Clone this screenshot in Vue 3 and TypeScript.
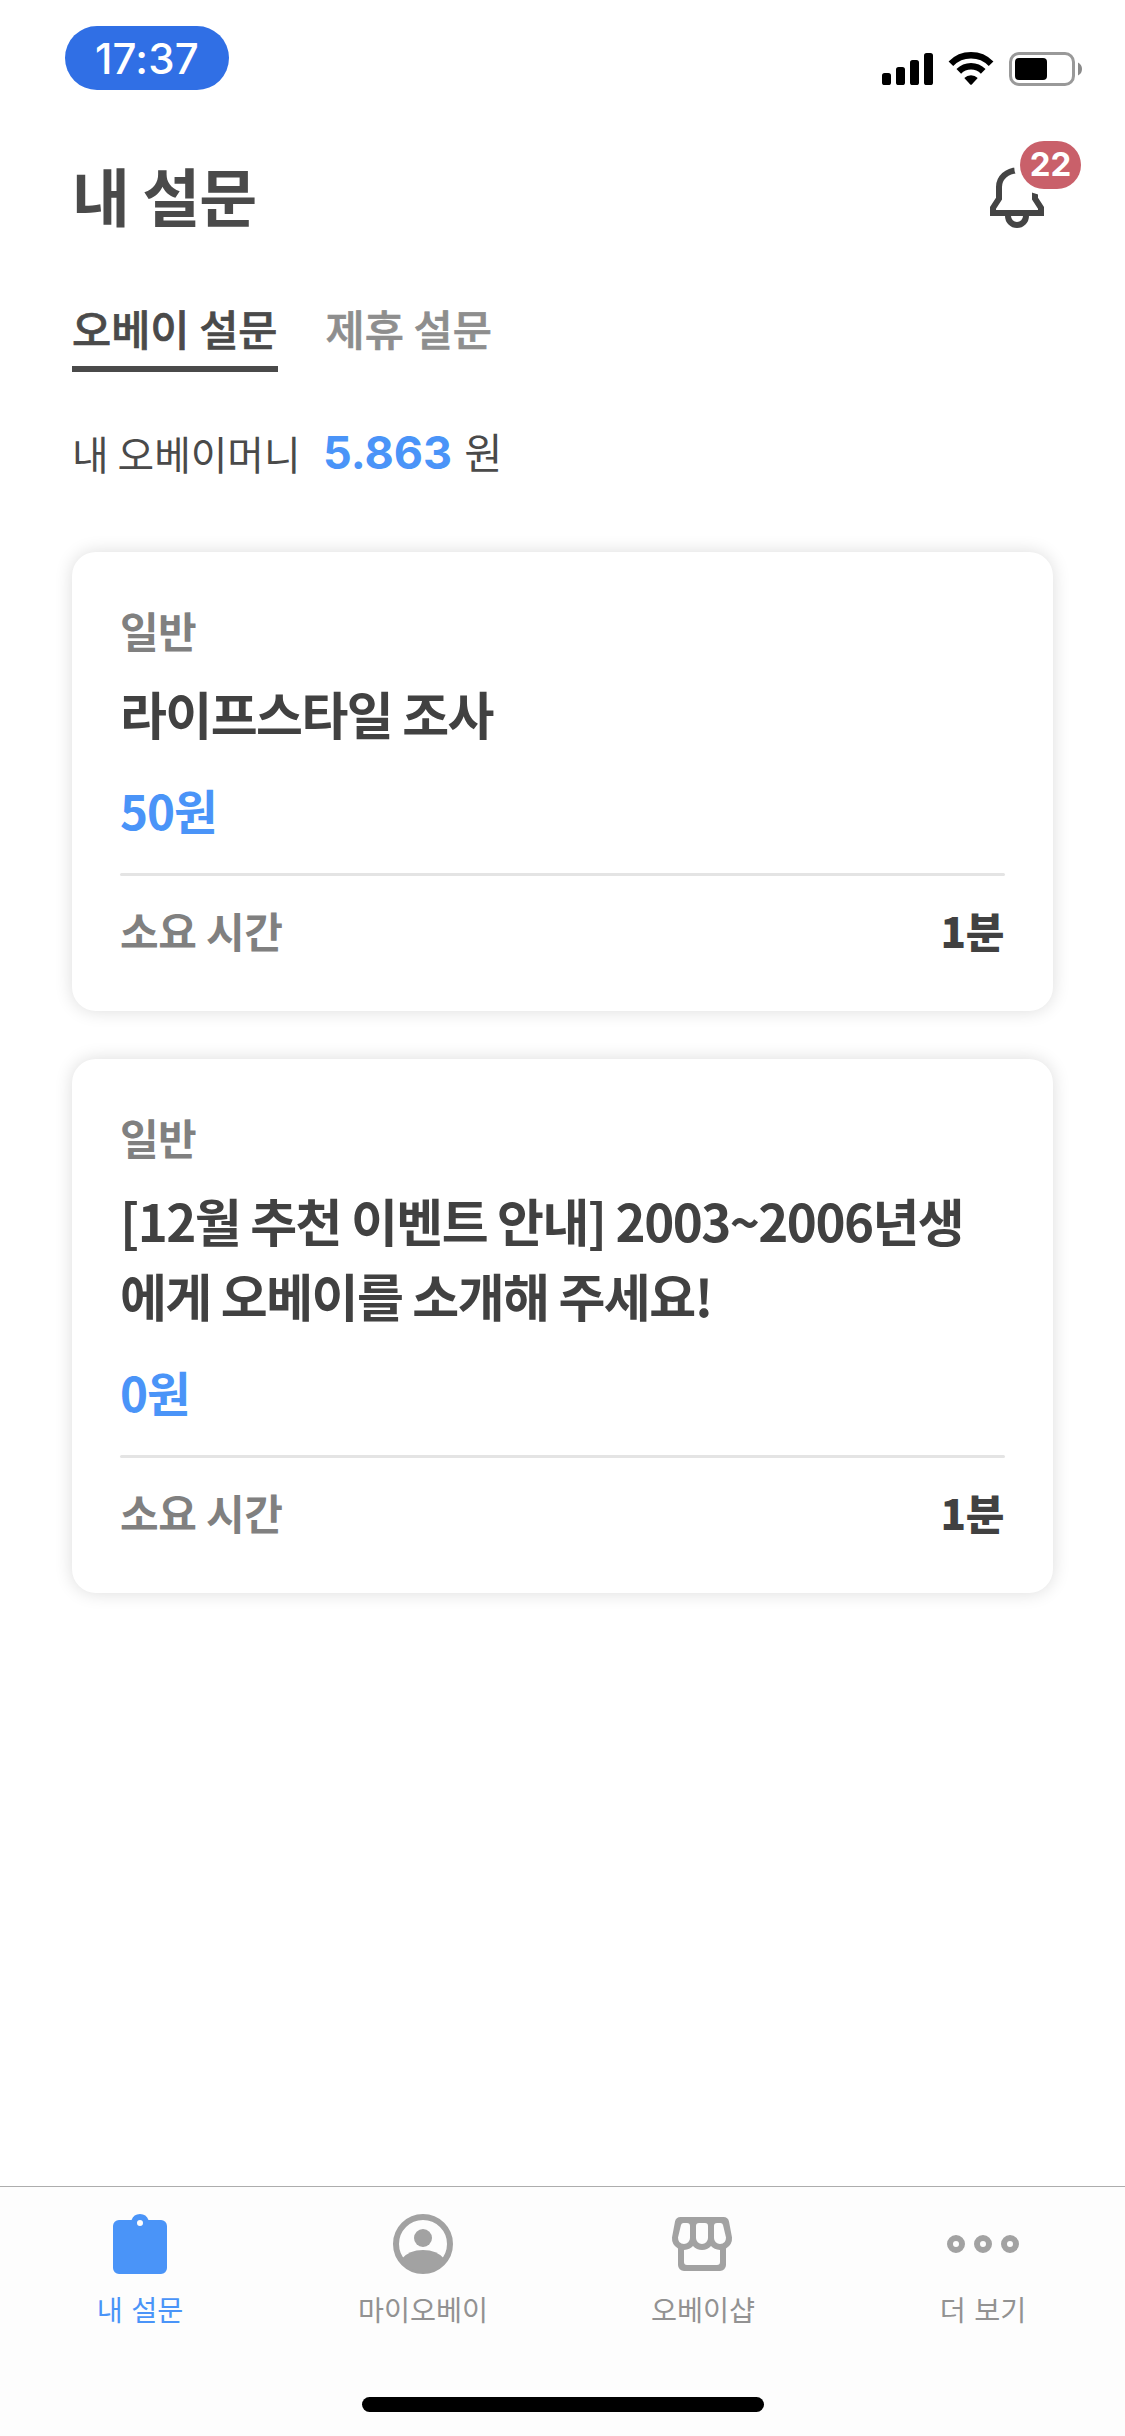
<script setup lang="ts">
interface Survey {
  kind: string
  title: string[]
  reward: string
  duration: string
}

const surveys: Survey[] = [
  { kind: '일반', title: ['라이프스타일 조사'], reward: '50원', duration: '1분' },
  {
    kind: '일반',
    title: ['[12월 추천 이벤트 안내] 2003~2006년생', '에게 오베이를 소개해 주세요!'],
    reward: '0원',
    duration: '1분',
  },
]
</script>

<template>
  <div class="screen">
    <header class="status">
      <span class="clock">17:37</span>
      <svg class="indicators" width="204" height="40" viewBox="880 49 204 40">
        <rect x="882" y="73" width="9" height="12" rx="2.6" />
        <rect x="896" y="67" width="9" height="18" rx="2.6" />
        <rect x="910" y="60" width="9" height="25" rx="2.6" />
        <rect x="924" y="53" width="9" height="32" rx="2.6" />
        <g fill="none" stroke="#000" stroke-width="6.5">
          <path d="M950.9 63.8A28.1 28.1 0 0 1 991.1 63.8" />
          <path d="M958.8 71.4A17.1 17.1 0 0 1 983.2 71.4" />
        </g>
        <path d="M964.3 77.9A9.5 9.5 0 0 1 977.7 77.9L972 84.2Q971 85.2 970 84.2Z" />
        <rect x="1010.5" y="53.5" width="63" height="31" rx="8.5" fill="none" stroke="#999" stroke-width="3" />
        <rect x="1015" y="58" width="32" height="22" rx="4" />
        <path d="M1078 62.5Q1082 64.5 1082 69T1078 75.5Z" fill="#8a8a8a" />
      </svg>
    </header>

    <div class="heading">
      <h1>내 설문</h1>
      <div class="bell">
        <svg width="60" height="66" viewBox="987 165 60 66" fill="none" stroke="#444" stroke-width="6">
          <path d="M993 213V207.9L999 198.5V187A18 16.5 0 0 1 1035 187V198.5L1041 207.9V213Z" />
          <path d="M1008 216A9 9 0 0 0 1026 216" />
        </svg>
        <span class="badge">22</span>
      </div>
    </div>

    <nav class="tabs">
      <span class="tab on">오베이 설문</span>
      <span class="tab">제휴 설문</span>
    </nav>

    <p class="balance"><span>내 오베이머니</span><b>5.863</b><span class="unit">원</span></p>

    <main class="list">
      <article v-for="(s, i) in surveys" :key="i" class="card">
        <div class="kind">{{ s.kind }}</div>
        <h2><span v-for="line in s.title" :key="line">{{ line }}</span></h2>
        <div class="reward">{{ s.reward }}</div>
        <hr />
        <div class="time"><span>소요 시간</span><strong>{{ s.duration }}</strong></div>
      </article>
    </main>

    <footer class="bar">
      <div class="item on">
        <svg width="72" height="72" viewBox="0 0 72 72">
          <path fill-rule="evenodd" d="M15 12H27.5A9 9 0 0 1 44.5 12H57A6 6 0 0 1 63 18V60A6 6 0 0 1 57 66H15A6 6 0 0 1 9 60V18A6 6 0 0 1 15 12ZM36 12A3 3 0 0 0 36 18A3 3 0 0 0 36 12Z" />
        </svg>
        <span>내 설문</span>
      </div>
      <div class="item">
        <svg width="72" height="72" viewBox="0 0 72 72">
          <circle cx="36" cy="36" r="27" fill="none" stroke="#a2a2a2" stroke-width="6" />
          <circle cx="36" cy="30" r="9" />
          <path d="M14.5 51Q22 42 36 42T57.5 51L52 60L36 65L20 60Z" />
        </svg>
        <span>마이오베이</span>
      </div>
      <div class="item shop">
        <svg width="72" height="72" viewBox="0 0 72 72">
          <path fill-rule="evenodd" d="M14.5 9H57.5Q62 9 63 13.5L66 29.5Q66.5 36.5 60 40.5V57A6 6 0 0 1 54 63H18A6 6 0 0 1 12 57V40.5Q5.5 36.5 6 29.5L9 13.5Q10 9 14.5 9ZM17.5 15Q15.5 15 15 17L12 29.5Q12 36 18 36A6 6 0 0 0 24 30V18Q24 15 21 15ZM33 15Q30 15 30 18V30A6 6 0 0 0 42 30V18Q42 15 39 15ZM51 15Q48 15 48 18V30A6 6 0 0 0 54 36Q60 36 60 29.5L57 17Q56.5 15 54.5 15ZM18 42Q24 41.5 27 38Q30.5 42 36 42T45 38Q48 41.5 54 42V54A3 3 0 0 1 51 57H21A3 3 0 0 1 18 54Z" />
        </svg>
        <span>오베이샵</span>
      </div>
      <div class="item">
        <svg width="72" height="72" viewBox="0 0 72 72" fill="none" stroke="#a2a2a2" stroke-width="6">
          <g fill="none">
            <circle cx="9" cy="36" r="6" />
            <circle cx="36" cy="36" r="6" />
            <circle cx="63" cy="36" r="6" />
          </g>
        </svg>
        <span>더 보기</span>
      </div>
      <i class="home"></i>
    </footer>
  </div>
</template>

<style>
body {
  background: #fff;
}
</style>

<style scoped>
.screen {
  box-sizing: border-box;
  width: 1125px;
  height: 2436px;
  display: flex;
  flex-direction: column;
  overflow: hidden;
  background: #fff;
  color: #4a4a4a;
  font-family: 'Noto Sans CJK KR', sans-serif;
}
.status {
  height: 114px;
  display: flex;
  align-items: flex-start;
  justify-content: space-between;
  padding: 26px 41px 0 65px;
  box-sizing: border-box;
  flex: none;
}
.clock {
  width: 164px;
  height: 64px;
  border-radius: 32px;
  background: #306fe5;
  color: #fff;
  font: 500 42px/65px Inter, sans-serif;
  letter-spacing: 0.2px;
  text-align: center;
}
.indicators {
  margin-top: 23px;
}
.heading {
  height: 168px;
  flex: none;
  display: flex;
  justify-content: space-between;
  padding: 0 78px 0 72px;
}
h1 {
  margin: 33px 0 0;
  font-size: 63px;
  line-height: 93px;
  font-weight: 700;
  letter-spacing: -1px;
}
.bell {
  position: relative;
  margin-top: 51px;
  width: 60px;
  height: 66px;
}
.bell svg {
  display: block;
}
.badge {
  position: absolute;
  left: 33px;
  top: -24px;
  width: 61px;
  height: 48px;
  border-radius: 24px;
  background: #c9606a;
  box-shadow: 0 0 0 6px #fff;
  color: #fff;
  font: 700 33px/46px Inter, sans-serif;
  text-align: center;
}
.tabs {
  flex: none;
  display: flex;
  align-items: flex-start;
  gap: 48px;
  height: 118px;
  padding: 15px 72px 0;
  box-sizing: border-box;
}
.tab {
  height: 69px;
  line-height: 61px;
  font-size: 42.6px;
  font-weight: 500;
  color: #8e8e8e;
  -webkit-text-stroke: 0.7px currentColor;
}
.tab.on {
  color: #4a4a4a;
  border-bottom: 6px solid #4a4a4a;
}
.balance {
  flex: none;
  display: flex;
  margin: 0;
  height: 152px;
  padding: 22px 72px 0;
  box-sizing: border-box;
  font-size: 39.8px;
  line-height: 61px;
}
.balance b {
  margin: 0 12px 0 22.5px;
  color: #4a94f8;
  font-family: Inter, sans-serif;
  font-size: 45px;
  font-weight: 700;
  line-height: 62px;
}
.balance .unit {
  font-size: 41.5px;
  line-height: 58px;
}
.list {
  flex: 1;
  min-height: 0;
  display: flex;
  flex-direction: column;
  gap: 48px;
  padding: 0 72px;
}
.card {
  padding: 48px;
  border-radius: 24px;
  background: #fff;
  box-shadow: 0 0 18px rgba(0, 0, 0, 0.14);
}
.kind {
  height: 70px;
  font-size: 42px;
  line-height: 60px;
  font-weight: 700;
  letter-spacing: -0.6px;
  color: #808080;
}
h2 {
  margin: 6px 0 0;
  font-size: 51px;
  line-height: 75px;
  font-weight: 700;
  letter-spacing: -1.55px;
  color: #414141;
  white-space: nowrap;
}
h2 span {
  display: block;
}
.reward {
  margin-top: 15px;
  height: 59px;
  font-size: 47.5px;
  line-height: 88px;
  font-weight: 700;
  letter-spacing: -1px;
  color: #4a94f8;
}
hr {
  margin: 48px 0 0;
  height: 3px;
  border: 0;
  border-radius: 1.5px;
  background: #e4e4e4;
}
.time {
  display: flex;
  justify-content: space-between;
  margin-top: 23px;
  height: 64px;
  padding-right: 1px;
  font-size: 42px;
  line-height: 62px;
  font-weight: 700;
  letter-spacing: -0.3px;
  color: #808080;
}
.time strong {
  color: #414141;
}
.bar {
  position: relative;
  flex: none;
  height: 250px;
  box-sizing: border-box;
  border-top: 1px solid #adadad;
  background: #fdfdfd;
  display: grid;
  grid-template-columns: 280px 286px 272px 290px;
  overflow: hidden;
}
.item {
  display: flex;
  flex-direction: column;
  align-items: center;
  padding-top: 21px;
  font-size: 28.3px;
  line-height: 42px;
  word-spacing: 2.3px;
  color: #929292;
}
.item svg {
  fill: #a2a2a2;
}
.item span {
  margin-top: 8px;
}
.item.shop span {
  padding-left: 2px;
}
.item.on {
  color: #4a94f8;
}
.item.on svg {
  fill: #4a94f8;
}
.home {
  position: absolute;
  left: 362px;
  bottom: 24px;
  width: 402px;
  height: 15px;
  border-radius: 8px;
  background: #000;
}
</style>
